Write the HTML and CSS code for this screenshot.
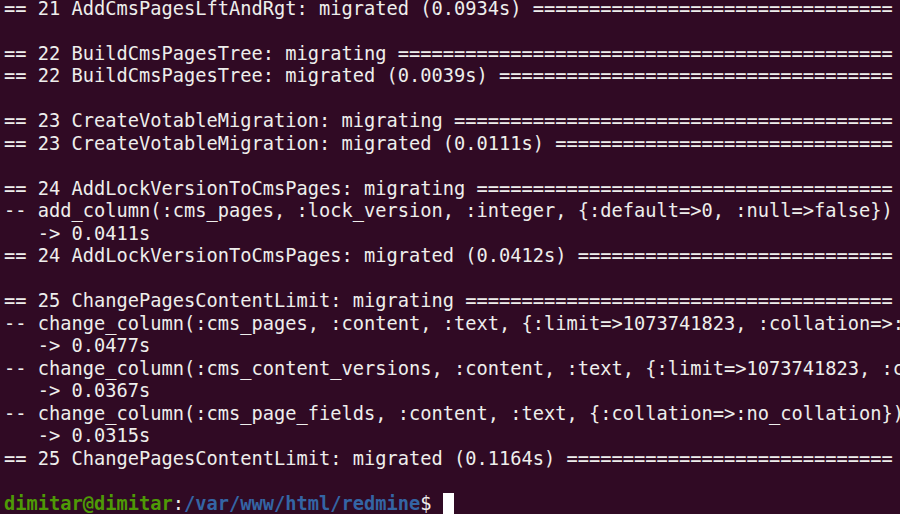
FILE: index.html
```html
<!DOCTYPE html>
<html>
<head>
<meta charset="utf-8">
<link rel="stylesheet" href="styles.css">
</head>
<body>
<div class="terminal">
  <div class="output">
    <div class="line">== 21 AddCmsPagesLftAndRgt: migrated (0.0934s) ================================</div>
    <div class="line"></div>
    <div class="line">== 22 BuildCmsPagesTree: migrating ============================================</div>
    <div class="line">== 22 BuildCmsPagesTree: migrated (0.0039s) ===================================</div>
    <div class="line"></div>
    <div class="line">== 23 CreateVotableMigration: migrating =======================================</div>
    <div class="line">== 23 CreateVotableMigration: migrated (0.0111s) ==============================</div>
    <div class="line"></div>
    <div class="line">== 24 AddLockVersionToCmsPages: migrating =====================================</div>
    <div class="line">-- add_column(:cms_pages, :lock_version, :integer, {:default=&gt;0, :null=&gt;false})</div>
    <div class="line"><span class="indent">   </span>-&gt; 0.0411s</div>
    <div class="line">== 24 AddLockVersionToCmsPages: migrated (0.0412s) ============================</div>
    <div class="line"></div>
    <div class="line">== 25 ChangePagesContentLimit: migrating ======================================</div>
    <div class="line">-- change_column(:cms_pages, :content, :text, {:limit=&gt;1073741823, :collation=&gt;:no_collation})</div>
    <div class="line"><span class="indent">   </span>-&gt; 0.0477s</div>
    <div class="line">-- change_column(:cms_content_versions, :content, :text, {:limit=&gt;1073741823, :collation=&gt;:no_collation})</div>
    <div class="line"><span class="indent">   </span>-&gt; 0.0367s</div>
    <div class="line">-- change_column(:cms_page_fields, :content, :text, {:collation=&gt;:no_collation})</div>
    <div class="line"><span class="indent">   </span>-&gt; 0.0315s</div>
    <div class="line">== 25 ChangePagesContentLimit: migrated (0.1164s) =============================</div>
    <div class="line"></div>
    <div class="line"><span class="user">dimitar@dimitar</span>:<span class="path">/var/www/html/redmine</span>$ <span class="cursor"></span></div>
  </div>
</div>
</body>
</html>
```

FILE: styles.css
```css
html, body {
  margin: 0;
  padding: 0;
  background: #300a24;
  overflow: hidden;
  caret-color: transparent;
  user-select: none;
  cursor: none;
}

.terminal {
  width: 900px;
  height: 514px;
  overflow: hidden;
  background: #300a24;
  cursor: none;
}

.output {
  display: flex;
  flex-direction: column;
  margin-top: -2.5px;
  padding-left: 4px;
  font-family: "DejaVu Sans Mono", monospace;
  font-size: 18.7px;
  line-height: 22.5px;
  color: #eeeeec;
}

.line {
  height: 22.5px;
  flex: none;
  white-space: pre;
  overflow: hidden;
}

.user {
  color: #4e9a06;
  font-weight: bold;
}

.path {
  color: #3465a4;
  font-weight: bold;
}

.cursor {
  display: inline-block;
  width: 11px;
  height: 22.5px;
  background: #ffffff;
  vertical-align: top;
}
```
